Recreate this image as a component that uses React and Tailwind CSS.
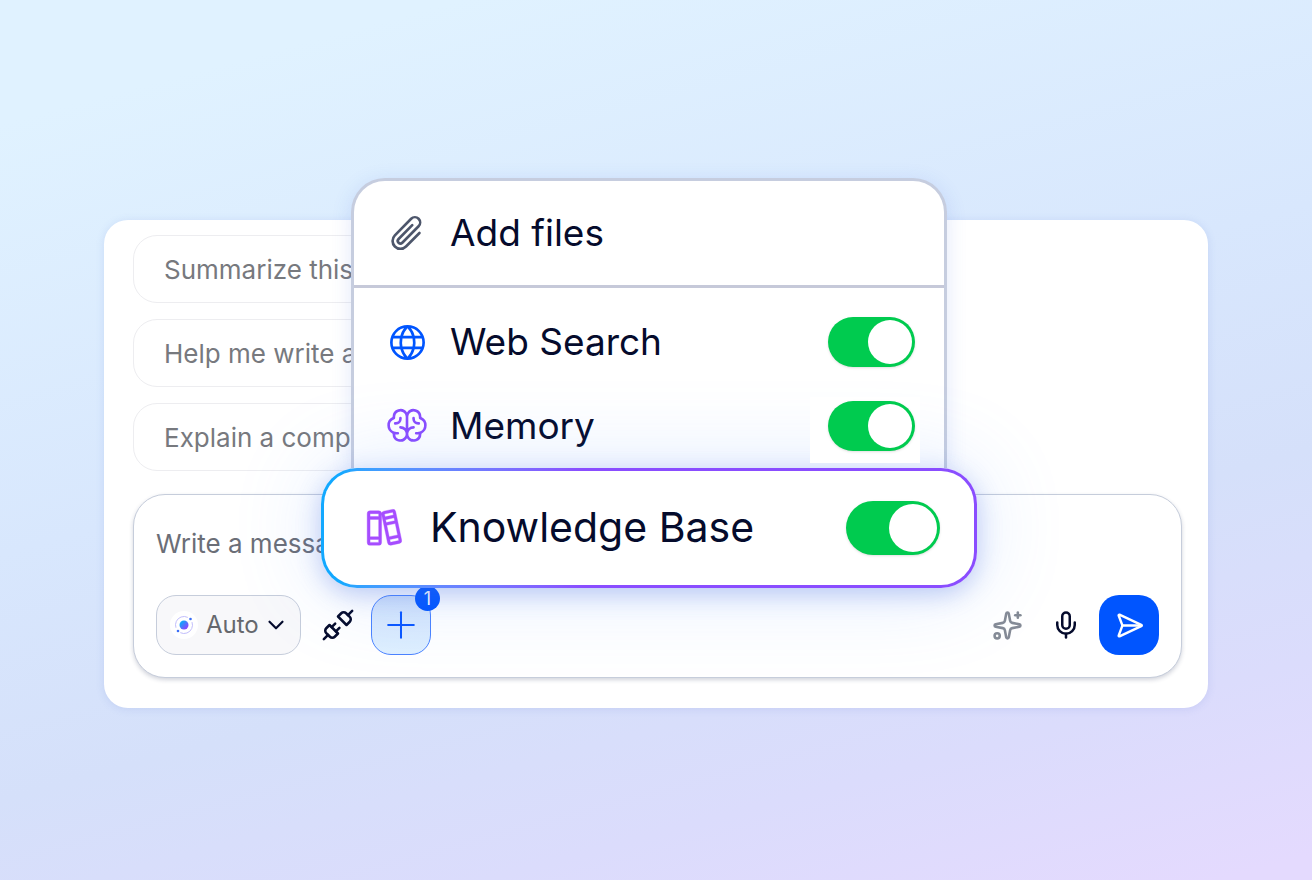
import React from 'react'
import { ChevronDown, Mic, Plus, SendHorizontal, Sparkles, Unplug } from 'lucide-react'
import { PiBooks, PiBrain, PiGlobe, PiPaperclip } from 'react-icons/pi'

const suggestions = ['Summarize this', 'Help me write a', 'Explain a complex']

function AutoIcon() {
  return (
    <svg width="28" height="28" viewBox="0 0 28 28" fill="none" aria-hidden="true">
      <defs>
        <linearGradient id="auto-core" x1="10" y1="10" x2="18" y2="18" gradientUnits="userSpaceOnUse">
          <stop offset="0.2" stopColor="#18a0fb" />
          <stop offset="1" stopColor="#a035ff" />
        </linearGradient>
      </defs>
      <circle cx="14" cy="14" r="14" fill="#fff" />
      <circle cx="14" cy="14" r="8.5" stroke="#b9b4fa" strokeWidth="0.8" strokeDasharray="20 6.7" transform="rotate(-20 14 14)" />
      <circle cx="14" cy="14" r="4.5" fill="url(#auto-core)" />
      <circle cx="20.5" cy="8" r="1.3" fill="#3b6ef6" />
      <circle cx="8" cy="20" r="1.3" fill="#3b6ef6" />
    </svg>
  )
}

function Composer() {
  return (
    <div className="mt-[23px] rounded-[32px] border border-[#c6cddb] bg-white px-[22px] pt-7 pb-[22px] shadow-[0_2px_4px_rgba(30,40,80,0.2)]">
      <input
        type="text"
        aria-label="Message"
        placeholder="Write a message"
        className="block h-10 w-full bg-transparent text-[26px] text-[#6b6e77] outline-none placeholder:text-[#6b6e77]"
      />
      <div className="mt-8 flex items-center">
        <button
          type="button"
          className="flex h-[60px] w-[145px] items-center rounded-[20px] border border-[#c6cddb] bg-[#f8f8fa] pl-[13px] text-2xl text-[#66686d]"
        >
          <AutoIcon />
          <span className="ml-2">Auto</span>
          <ChevronDown size={26} strokeWidth={2} className="ml-1 text-[#050b2c]" />
        </button>
        <button type="button" aria-label="Connectors" className="ml-5 text-[#050b2c]">
          <Unplug size={34} strokeWidth={1.8} />
        </button>
        <button
          type="button"
          aria-label="Add"
          className="relative ml-4 flex size-[60px] items-center justify-center rounded-[20px] border border-[#4a83ff] bg-linear-to-b from-[#d3e3fb] to-[#dff0ff] text-[#0a57ff]"
        >
          <Plus size={44} strokeWidth={1.1} />
          <span className="absolute -top-2.5 -right-2.5 flex size-[25px] items-center justify-center rounded-full bg-[#0055ff] text-lg text-white">
            1
          </span>
        </button>
        <div className="ml-auto flex items-center">
          <button type="button" aria-label="Improve prompt" className="text-[#858b96]">
            <Sparkles size={31} strokeWidth={2} />
          </button>
          <button type="button" aria-label="Dictate" className="ml-7 text-[#050b2c]">
            <Mic size={30} strokeWidth={2} />
          </button>
          <button
            type="button"
            aria-label="Send"
            className="ml-[18px] flex size-[60px] items-center justify-center rounded-[20px] bg-[#0055ff] text-white"
          >
            <SendHorizontal size={29} strokeWidth={2} />
          </button>
        </div>
      </div>
    </div>
  )
}

function ToolRow({ id, label, icon, patch }) {
  return (
    <div className="flex h-[84px] items-center pr-[27px] pl-[31px]">
      <span className="flex w-11 justify-center">{icon}</span>
      <label htmlFor={id} className="ml-[21px] text-[37px] leading-[48px] text-[#050b2c]">
        {label}
      </label>
      <span className={patch ? 'relative z-10 -mr-[3px] mt-2 ml-auto bg-white pt-1 pr-[5px] pb-3 pl-[18px]' : 'ml-auto pr-0.5'}>
        <input
          id={id}
          type="checkbox"
          role="switch"
          defaultChecked
          className="flex h-[50px] w-[87px] appearance-none items-center rounded-full bg-[#d5d9e0] p-[3px] shadow-sm before:size-11 before:rounded-full before:bg-white checked:justify-end checked:bg-[#00cb4f]"
        />
      </span>
    </div>
  )
}

function ToolsMenu() {
  return (
    <div className="absolute -top-[42px] left-[217px] w-[656px]">
      <div className="mx-[30px] rounded-t-[34px] border-[3px] border-b-0 border-[#c6cddf] bg-white shadow-[0_4px_20px_rgba(60,100,220,0.15)]">
        <button
          type="button"
          className="flex h-[107px] w-full items-center border-b-[3px] border-[#c6c9d9] pl-[31px] text-left text-[37px] text-[#050b2c]"
        >
          <span className="flex w-11 justify-center">
            <PiPaperclip size={42} className="text-[#4d566b]" />
          </span>
          <span className="ml-[21px]">Add files</span>
        </button>
        <div className="pt-3">
          <ToolRow id="web-search" label="Web Search" icon={<PiGlobe size={43} className="text-[#0055ff]" />} />
          <ToolRow id="memory" label="Memory" icon={<PiBrain size={42} className="text-[#8a4dff]" />} patch />
        </div>
      </div>
      <div className="relative rounded-[36px] bg-linear-to-r from-[#12a8ff] from-3% to-[#8a4dff] to-40% p-[3px] shadow-[0_6px_24px_rgba(60,100,220,0.3),0_0_90px_rgba(90,150,255,0.2)]">
        <div className="flex h-[114px] items-center rounded-[33px] bg-white pr-[34px] pl-[35px]">
          <span className="flex w-12 justify-center">
            <PiBooks size={46} stroke="currentColor" strokeWidth={2} className="text-[#a64dff]" />
          </span>
          <label htmlFor="knowledge-base" className="ml-[23px] text-[41px] text-[#050b2c]">
            Knowledge Base
          </label>
          <input
            id="knowledge-base"
            type="checkbox"
            role="switch"
            defaultChecked
            className="ml-auto flex h-[54px] w-[94px] appearance-none items-center rounded-full bg-[#d5d9e0] p-[3px] shadow-sm before:size-12 before:rounded-full before:bg-white checked:justify-end checked:bg-[#00cb4f]"
          />
        </div>
      </div>
    </div>
  )
}

export default function App() {
  return (
    <main className="min-h-screen bg-[linear-gradient(165deg,#e0f2ff_10%,#d8e7fd_45%,#d5e0fa_65%,#dbdcfc_82%,#e4dafe_98%)] px-[104px] pt-[220px] pb-10 font-['Inter',sans-serif]">
      <section className="relative rounded-3xl bg-white pt-[15px] pr-[26px] pb-[30px] pl-[29px] shadow-[0_1px_8px_rgba(80,110,200,0.15)]">
        <div className="flex flex-col items-start gap-4">
          {suggestions.map((text) => (
            <button
              key={text}
              type="button"
              className="flex h-[68px] w-[480px] items-center rounded-3xl border border-[#ededf0] pl-[30px] text-[26px] text-[#77797e]"
            >
              {text}
            </button>
          ))}
        </div>
        <Composer />
        <ToolsMenu />
      </section>
    </main>
  )
}
